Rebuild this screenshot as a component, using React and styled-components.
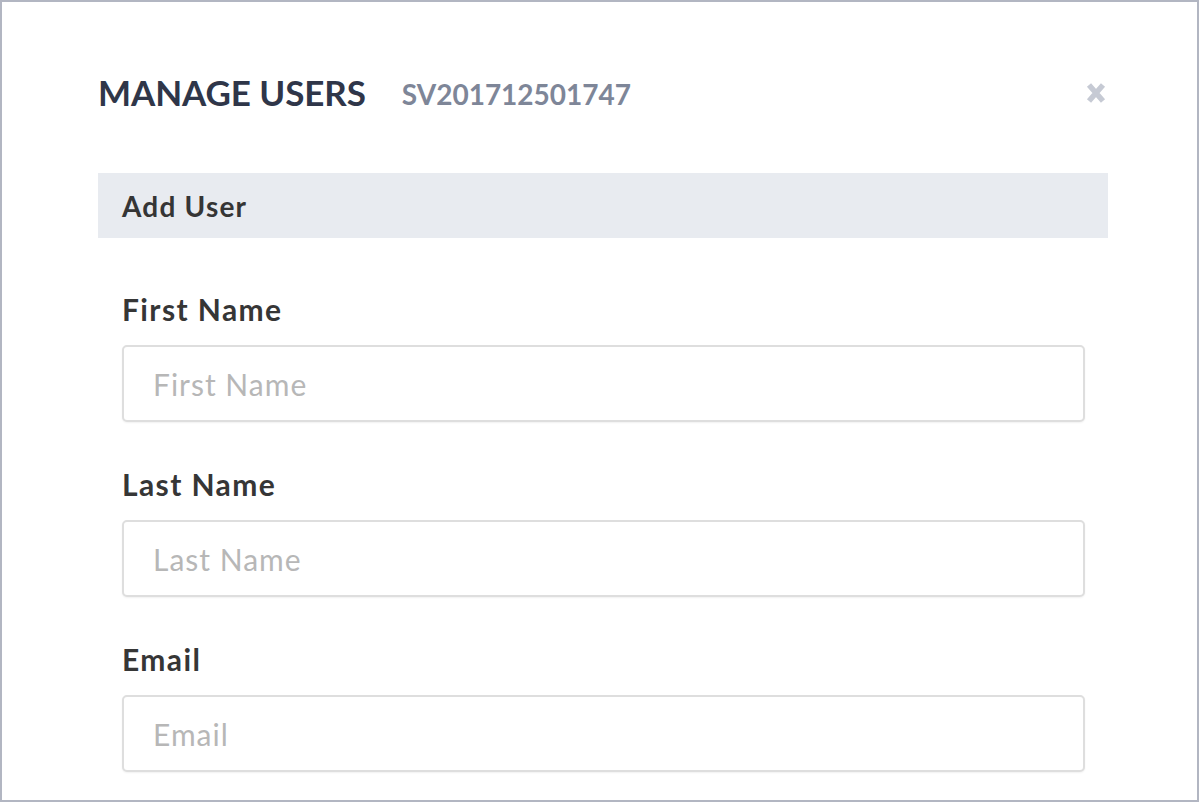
import React from 'react';
import styled, { createGlobalStyle } from 'styled-components';

const GlobalStyle = createGlobalStyle`
  html, body {
    margin: 0;
    padding: 0;
    background: #ffffff;
  }
  body {
    font-family: 'Lato', 'Open Sans', sans-serif;
  }
`;

const Frame = styled.div`
  box-sizing: border-box;
  width: 1199px;
  height: 802px;
  border: 2px solid #b2b6c2;
  background: #ffffff;
  overflow: hidden;
  padding: 68px 89px 0 96px;
`;

const Header = styled.div`
  display: flex;
  align-items: center;
  height: 44px;
  padding-right: 3px;
`;

const Title = styled.h1`
  margin: 0;
  font-size: 35px;
  line-height: 44px;
  font-weight: 700;
  color: #2f3649;
  letter-spacing: -0.1px;
`;

const Serial = styled.span`
  margin-left: 36px;
  font-size: 28px;
  line-height: 44px;
  font-weight: 700;
  color: #7e8698;
  margin-top: 3px;
`;

const Close = styled.button`
  margin-left: auto;
  border: none;
  background: none;
  padding: 0;
  width: 22px;
  height: 24px;
  cursor: pointer;
  display: flex;
  margin-top: 1px;
  margin-right: -2px;
`;

const Band = styled.div`
  margin-top: 59px;
  height: 65px;
  background: #e8ebf0;
  display: flex;
  align-items: center;
  padding-left: 24px;
  font-size: 28px;
  letter-spacing: 1.2px;
  font-weight: 700;
  color: #353535;
`;

const Form = styled.form`
  padding: 54px 23px 0 24px;
  display: flex;
  flex-direction: column;
`;

const Field = styled.div`
  display: flex;
  flex-direction: column;
  & + & {
    margin-top: 45px;
  }
`;

const Label = styled.label`
  font-size: 30px;
  line-height: 34px;
  letter-spacing: 1.4px;
  font-weight: 700;
  color: #363636;
`;

const Input = styled.input`
  box-sizing: border-box;
  margin-top: 19px;
  height: 77px;
  width: 100%;
  border: 2px solid #dedede;
  border-radius: 5px;
  box-shadow: 0 1px 2px rgba(0, 0, 0, 0.06);
  padding: 0 0 0 29px;
  font-family: 'Lato', sans-serif;
  font-size: 30px;
  letter-spacing: 1px;
  color: #333;
  outline: none;
  &::placeholder {
    color: #b7b7b7;
  }
`;

const fields = ['First Name', 'Last Name', 'Email'];

export default function App() {
  return (
    <>
      <GlobalStyle />
      <Frame>
        <Header>
          <Title>MANAGE USERS</Title>
          <Serial>SV201712501747</Serial>
          <Close aria-label="close">
            <svg width="22" height="24" viewBox="0 0 22 24">
              <path d="M4 4 L18 20 M18 4 L4 20" stroke="#c6cad4" strokeWidth="5.5" strokeLinecap="butt" />
            </svg>
          </Close>
        </Header>
        <Band>Add User</Band>
        <Form>
          {fields.map(name => (
            <Field key={name}>
              <Label>{name}</Label>
              <Input placeholder={name} />
            </Field>
          ))}
        </Form>
      </Frame>
    </>
  );
}
